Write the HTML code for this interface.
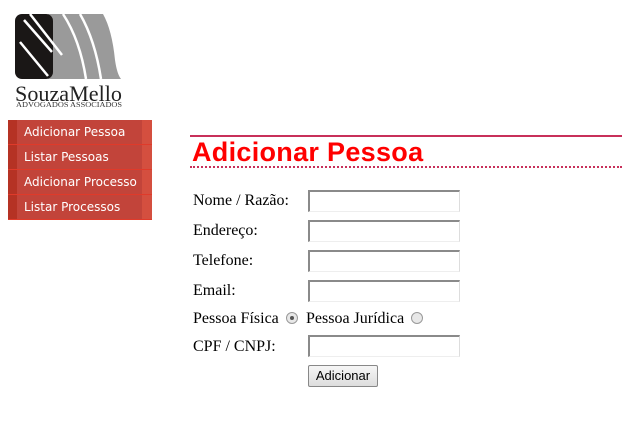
<!DOCTYPE html>
<html><head><meta charset="utf-8"><style>
*{margin:0;padding:0;box-sizing:border-box}
body{width:622px;height:426px;background:#fff;position:relative;overflow:hidden;font-family:"Liberation Serif",serif}
.abs{position:absolute}
.menu div{position:absolute;left:8px;width:144px;height:25px;background:#c2443a;color:#fff;font:12px "DejaVu Sans",sans-serif;line-height:24px;padding-left:16px;border-bottom:1px solid #e03a2a}
.menu div:before{content:"";position:absolute;left:0;top:0;width:9px;height:100%;background:#b53224}
.menu div:after{content:"";position:absolute;right:0;top:0;width:10px;height:100%;background:#d44f3f}
.lbl{position:absolute;left:193px;font-size:16px;color:#000}
.inp{position:absolute;left:308px;width:152px;height:22px;border:1px solid #999;border-right-color:#ddd;border-bottom-color:#eee;border-top:2px solid #8a8a8a;border-left:2px solid #8a8a8a;background:#fff}
.radio{position:absolute;width:12px;height:12px;border-radius:50%;border:1px solid #999;background:#e8e8e8}
</style></head><body>
<svg class="abs" style="left:0;top:0" width="140" height="110">
<path d="M48 14 L103 14 Q112 30 115 60 Q117 74 121 79 L48 79 Z" fill="#9a9a9a"/>
<rect x="15" y="14" width="38" height="65" rx="7" fill="#1a1716"/>
<path d="M24 20 L52 52 M20 42 L48 76 M30 14 L62 55 M63 14 Q80 40 86 79 M80 14 Q95 40 101 79" stroke="#fff" stroke-width="2.5" fill="none"/>
<text x="15" y="101" font-family="Liberation Serif,serif" font-size="22" fill="#222" textLength="107" lengthAdjust="spacingAndGlyphs">SouzaMello</text>
<text x="16" y="107" font-family="Liberation Serif,serif" font-size="7" fill="#333" textLength="106" lengthAdjust="spacingAndGlyphs">ADVOGADOS ASSOCIADOS</text>
</svg>
<div class="menu">
<div style="top:120px">Adicionar Pessoa</div>
<div style="top:145px">Listar Pessoas</div>
<div style="top:170px">Adicionar Processo</div>
<div style="top:195px">Listar Processos</div>
</div>
<div class="abs" style="left:190px;top:135px;width:432px;height:2px;background:#c8305a"></div>
<div class="abs" style="left:192px;top:137px;font:bold 27px 'Liberation Sans',sans-serif;color:#f00;letter-spacing:0.3px">Adicionar Pessoa</div>
<div class="abs" style="left:190px;top:166px;width:432px;border-top:2px dotted #c8305a"></div>
<div class="lbl" style="top:192px">Nome / Razão:</div>
<div class="inp" style="top:190px"></div>
<div class="lbl" style="top:222px">Endereço:</div>
<div class="inp" style="top:220px"></div>
<div class="lbl" style="top:252px">Telefone:</div>
<div class="inp" style="top:250px"></div>
<div class="lbl" style="top:282px">Email:</div>
<div class="inp" style="top:280px"></div>
<div class="lbl" style="top:310px">Pessoa Física</div>
<div class="radio" style="left:286px;top:312px"><div style="width:4px;height:4px;border-radius:50%;background:#555;margin:3px"></div></div>
<div class="lbl" style="left:306px;top:310px">Pessoa Jurídica</div>
<div class="radio" style="left:411px;top:312px"></div>
<div class="lbl" style="top:338px">CPF / CNPJ:</div>
<div class="inp" style="top:335px"></div>
<div class="abs" style="left:308px;top:365px;width:70px;height:22px;border:1px solid #888;border-radius:2px;background:linear-gradient(#f6f6f6,#ddd);font:13px 'Liberation Sans',sans-serif;text-align:center;line-height:20px">Adicionar</div>
</body></html>
